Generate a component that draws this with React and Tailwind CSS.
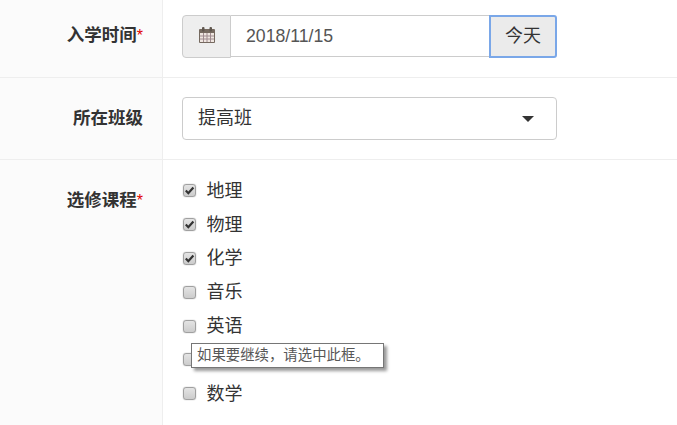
import React from 'react';

const COURSES = [
  { name: '地理', checked: true },
  { name: '物理', checked: true },
  { name: '化学', checked: true },
  { name: '音乐', checked: false },
  { name: '英语', checked: false },
  { name: '语文', checked: false },
  { name: '数学', checked: false },
];

const FONT = "font-['Liberation_Sans','Noto_Sans_CJK_SC',sans-serif]";

function Label({ text, required, className }) {
  return (
    <div className={`w-[163px] shrink-0 bg-[#fbfbfb] border-r border-[#eeeeee] pr-[19px] text-right text-[17.5px] leading-[24px] font-bold text-[#333333] ${className}`}>
      {text}
      {required && <span className="font-normal text-[16px] text-[#e00000]">*</span>}
    </div>
  );
}

function CalendarIcon() {
  return (
    <svg width="18" height="18" viewBox="0 0 18 18">
      <rect x="1" y="3" width="16" height="14" rx="1" fill="#75695f" />
      <rect x="2" y="7" width="14" height="9" fill="#efe6e0" />
      <path d="M5.5 7v9M9 7v9M12.5 7v9M2 10h14M2 13h14" stroke="#a08c90" strokeWidth="1" />
      <rect x="4" y="1" width="2.5" height="4.5" rx="1" fill="#5f564e" />
      <rect x="11.5" y="1" width="2.5" height="4.5" rx="1" fill="#5f564e" />
    </svg>
  );
}

function Checkbox({ checked }) {
  return (
    <span className="flex h-[13px] w-[13px] shrink-0 items-center justify-center rounded-[3px] border border-[#a0a0a0] bg-gradient-to-b from-[#e4e4e4] to-[#cccccc] shadow-[0_0_1px_#888]">
      {checked && (
        <svg width="11" height="11" viewBox="0 0 11 11">
          <path d="M1.8 5.6 L4.3 8.2 L9.4 2.4" fill="none" stroke="#333333" strokeWidth="2.2" />
        </svg>
      )}
    </span>
  );
}

export default function App() {
  return (
    <div className={`h-[425px] w-[677px] overflow-hidden bg-white ${FONT}`}>
      {/* 入学时间 */}
      <div className="flex h-[78px] border-b border-[#eeeeee]">
        <Label text="入学时间" required className="pt-[23px]" />
        <div className="flex pl-[19px] pt-[15px]">
          <div className="flex h-[43px] w-[49px] items-center justify-center rounded-l-[4px] border border-[#cccccc] bg-[#eeeeee] pb-[3px]">
            <CalendarIcon />
          </div>
          <div className="flex h-[42px] w-[258px] items-center border-y border-[#cccccc] pl-[15px] text-[17.7px] text-[#555555]">
            2018/11/15
          </div>
          <div className="flex h-[43px] w-[68px] items-center justify-center rounded-r-[3px] border-2 border-[#7aa7e8] bg-[#ebebeb] text-[18px] text-[#333333]">
            今天
          </div>
        </div>
      </div>

      {/* 所在班级 */}
      <div className="flex h-[82px] border-b border-[#eeeeee]">
        <Label text="所在班级" className="pt-[28px]" />
        <div className="pl-[19px] pt-[19px]">
          <div className="flex h-[43px] w-[375px] items-center justify-between rounded-[4px] border border-[#cccccc] bg-white pl-[15px] pr-[22px] text-[18px] text-[#333333]">
            提高班
            <span className="h-0 w-0 border-x-[6px] border-t-[6px] border-x-transparent border-t-[#333333]" />
          </div>
        </div>
      </div>

      {/* 选修课程 */}
      <div className="flex h-[265px]">
        <Label text="选修课程" required className="pt-[28px]" />
        <div className="relative flex flex-col pl-[20px] pt-[14px]">
          {COURSES.map(c => (
            <div key={c.name} className="flex h-[33.8px] items-center gap-[10.5px] text-[18px] text-[#333333]">
              <Checkbox checked={c.checked} />
              <span className="pt-[1px]">{c.name}</span>
            </div>
          ))}
          {/* Tooltip */}
          <div className="absolute left-[28px] top-[183px] flex h-[25px] w-[193px] items-center border border-[#767676] bg-white pl-[5px] text-[14.4px] text-[#575757] shadow-[3px_3px_3px_rgba(0,0,0,0.4)]">
            {'如果要继续\uFF0C请选中此框。'}
          </div>
        </div>
      </div>
    </div>
  );
}
